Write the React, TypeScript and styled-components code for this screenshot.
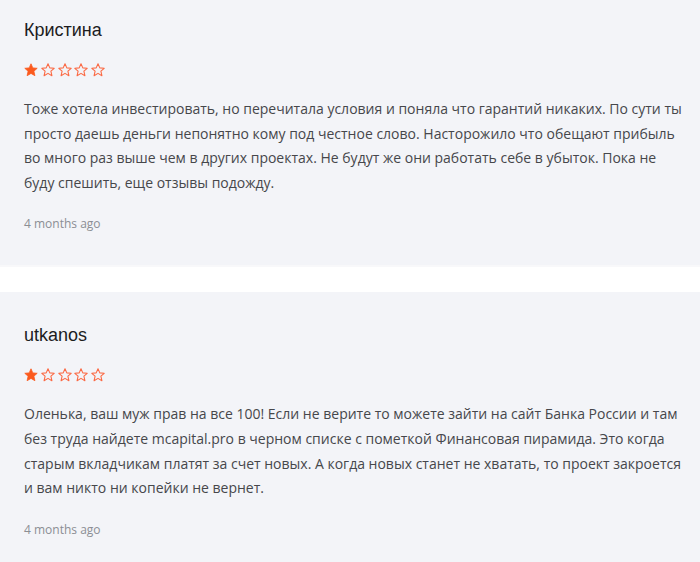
import React from "react";
import styled, { createGlobalStyle } from "styled-components";

const Global = createGlobalStyle`
  html, body { margin: 0; padding: 0; background: #ffffff; }
  body { font-family: "Open Sans", "Liberation Sans", sans-serif; }
`;

const Viewport = styled.div`
  width: 700px;
  height: 562px;
  overflow: hidden;
  background: #ffffff;
`;

const List = styled.div`
  display: flex;
  flex-direction: column;
  gap: 27px;
  margin-top: -13px;
`;

const Card = styled.article`
  background: #f3f4f8;
  padding: 32px 18px 31px 24px;
  box-shadow: 0 2px 0 #f8f8fa;
  display: flex;
  flex-direction: column;
`;

const Name = styled.div`
  font-family: "Liberation Sans", Arial, sans-serif;
  font-size: 18px;
  line-height: 22px;
  color: #1c1c1e;
`;

const Stars = styled.div`
  display: flex;
  gap: 2.75px;
  margin-top: 22px;
  height: 14px;
  align-items: center;
`;

const Body = styled.p`
  margin: 20px 0 0 0;
  font-family: "Open Sans", sans-serif;
  font-size: 14px;
  line-height: 24.6px;
  color: #46474b;
`;

const Time = styled.div`
  margin-top: 19px;
  font-family: "Open Sans", sans-serif;
  font-size: 12px;
  line-height: 20px;
  color: #8b8e94;
`;

const STAR = "M7 0.8 L8.8 4.9 L13.2 5.3 L9.9 8.2 L10.9 12.7 L7 10.4 L3.1 12.7 L4.1 8.2 L0.8 5.3 L5.2 4.9 Z";

const Star: React.FC<{ filled: boolean }> = ({ filled }) => (
  <svg width="14" height="14" viewBox="0 0 14 14">
    <path
      d={STAR}
      fill={filled ? "#fb5a1e" : "none"}
      stroke={filled ? "#fb5a1e" : "#fb6a45"}
      strokeWidth={filled ? 0.8 : 1.1}
      strokeLinejoin="round"
    />
  </svg>
);

const Rating: React.FC<{ value: number }> = ({ value }) => (
  <Stars>
    {[0, 1, 2, 3, 4].map((i) => (
      <Star key={i} filled={i < value} />
    ))}
  </Stars>
);

const reviews = [
  {
    name: "Кристина",
    rating: 1,
    text:
      "Тоже хотела инвестировать, но перечитала условия и поняла что гарантий никаких. По сути ты просто даешь деньги непонятно кому под честное слово. Насторожило что обещают прибыль во много раз выше чем в других проектах. Не будут же они работать себе в убыток. Пока не буду спешить, еще отзывы подожду.",
    time: "4 months ago",
  },
  {
    name: "utkanos",
    rating: 1,
    text:
      "Оленька, ваш муж прав на все 100! Если не верите то можете зайти на сайт Банка России и там без труда найдете mcapital.pro в черном списке с пометкой Финансовая пирамида. Это когда старым вкладчикам платят за счет новых. А когда новых станет не хватать, то проект закроется и вам никто ни копейки не вернет.",
    time: "4 months ago",
  },
];

export default function App() {
  return (
    <Viewport>
      <Global />
      <List>
        {reviews.map((r, i) => (
          <Card key={i}>
            <Name>{r.name}</Name>
            <Rating value={r.rating} />
            <Body>{r.text}</Body>
            <Time>{r.time}</Time>
          </Card>
        ))}
      </List>
    </Viewport>
  );
}
